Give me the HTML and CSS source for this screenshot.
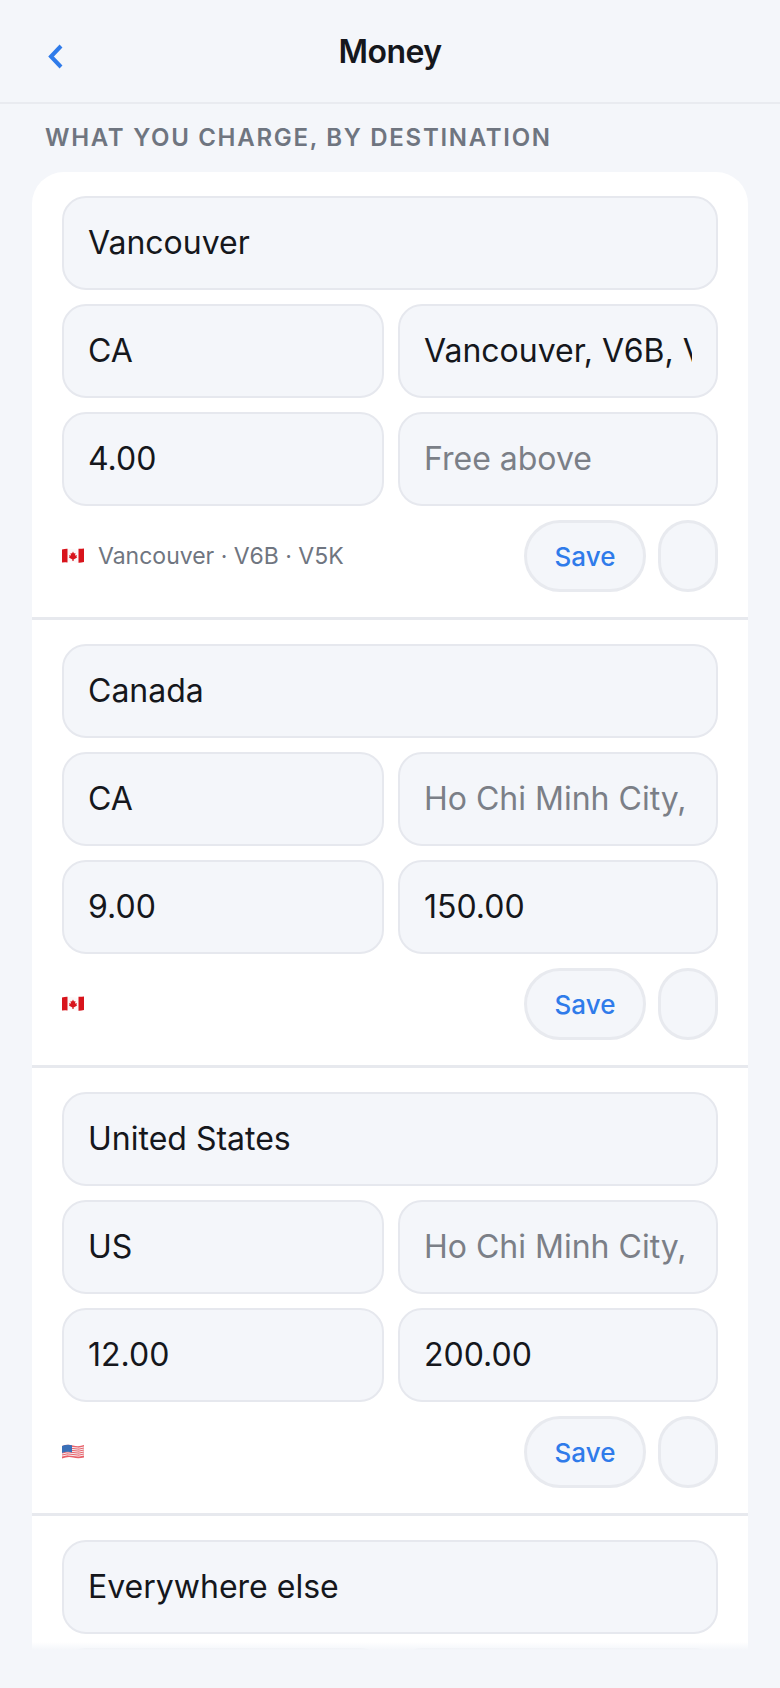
FILE: index.html
```html
<!DOCTYPE html>
<html>
<head>
    <title>Money</title>
    <meta charset="utf-8">
    <link rel="stylesheet" href="styles.css">
</head>
<body>
    <div class="app">
        <header class="topbar">
            <svg class="back" width="18" height="27" viewBox="0 0 18 27">
                <path d="M15 3 L5 13.5 L15 24" />
            </svg>
            <h1 class="title">Money</h1>
        </header>

        <main class="content">
            <h2 class="section-label">WHAT YOU CHARGE, BY DESTINATION</h2>

            <div class="card">
                <section class="zone">
                    <div class="field"><span class="field-text">Vancouver</span></div>
                    <div class="field-pair">
                        <div class="field"><span class="field-text">CA</span></div>
                        <div class="field"><span class="field-text">Vancouver, V6B, V5K</span></div>
                    </div>
                    <div class="field-pair">
                        <div class="field"><span class="field-text">4.00</span></div>
                        <div class="field"><span class="field-text placeholder">Free above</span></div>
                    </div>
                    <div class="zone-footer">
                        <div class="zone-info">
                            <svg class="flag" viewBox="0 0 22 16"><use href="#flag-ca" /></svg>
                            <span class="zone-note">Vancouver · V6B · V5K</span>
                        </div>
                        <button class="btn-save" type="button">Save</button>
                        <button class="btn-icon" type="button"></button>
                    </div>
                </section>

                <section class="zone">
                    <div class="field"><span class="field-text">Canada</span></div>
                    <div class="field-pair">
                        <div class="field"><span class="field-text">CA</span></div>
                        <div class="field"><span class="field-text placeholder">Ho Chi Minh City,</span></div>
                    </div>
                    <div class="field-pair">
                        <div class="field"><span class="field-text">9.00</span></div>
                        <div class="field"><span class="field-text">150.00</span></div>
                    </div>
                    <div class="zone-footer">
                        <div class="zone-info">
                            <svg class="flag" viewBox="0 0 22 16"><use href="#flag-ca" /></svg>
                        </div>
                        <button class="btn-save" type="button">Save</button>
                        <button class="btn-icon" type="button"></button>
                    </div>
                </section>

                <section class="zone">
                    <div class="field"><span class="field-text">United States</span></div>
                    <div class="field-pair">
                        <div class="field"><span class="field-text">US</span></div>
                        <div class="field"><span class="field-text placeholder">Ho Chi Minh City,</span></div>
                    </div>
                    <div class="field-pair">
                        <div class="field"><span class="field-text">12.00</span></div>
                        <div class="field"><span class="field-text">200.00</span></div>
                    </div>
                    <div class="zone-footer">
                        <div class="zone-info">
                            <svg class="flag" viewBox="0 0 22 16">
                                <path fill="#e8626a" d="M0 2 Q5 0 11 1.5 T22 1 V13.5 Q16 15 11 13.5 T0 14.5 Z" />
                                <path fill="none" stroke="#f6f0f2" stroke-width="1" d="M0 4 Q5 2 11 3.5 T22 3 M0 6 Q5 4 11 5.5 T22 5 M0 8 Q5 6 11 7.5 T22 7 M0 10 Q5 8 11 9.5 T22 9 M0 12 Q5 10 11 11.5 T22 11" />
                                <path fill="#3a70b8" d="M0 2 Q5 0 10 1.2 V8.4 Q5 7 0 9 Z" />
                            </svg>
                        </div>
                        <button class="btn-save" type="button">Save</button>
                        <button class="btn-icon" type="button"></button>
                    </div>
                </section>

                <section class="zone">
                    <div class="field"><span class="field-text">Everywhere else</span></div>
                    <div class="field-pair">
                        <div class="field"></div>
                        <div class="field"></div>
                    </div>
                </section>
            </div>
        </main>

        <div class="bottom-fade"></div>
    </div>

    <svg class="defs" width="0" height="0">
        <symbol id="flag-ca" viewBox="0 0 22 16">
            <path fill="#fbf8f8" d="M0 1.5 Q5 0 11 1.2 T22 0.5 V14 Q16 15.5 11 14 T0 14.5 Z" />
            <path fill="#d8141c" d="M0 1.5 Q3 0.6 5.5 0.7 V14.4 Q3 14.1 0 14.5 Z" />
            <path fill="#d8141c" d="M16.5 0.8 Q19 1 22 0.5 V14 Q19 14.8 16.5 14.7 Z" />
            <path fill="#d8141c" d="M11 3.5 L12 5.5 L13.5 5 L13 7.5 L15 7.2 L14.4 9 L15.2 9.6 L11.6 11.5 V13 H10.4 V11.5 L6.8 9.6 L7.6 9 L7 7.2 L9 7.5 L8.5 5 L10 5.5 Z" />
        </symbol>
    </svg>
</body>
</html>
```

FILE: styles.css
```css
* {
    box-sizing: border-box;
}

body {
    margin: 0;
    background-color: #f4f6fa;
    font-family: Inter, "Liberation Sans", sans-serif;
    color: #15171c;
}

.app {
    position: relative;
    display: flex;
    flex-direction: column;
    height: 100vh;
    overflow: hidden;
}

.topbar {
    flex: none;
    display: flex;
    align-items: center;
    justify-content: center;
    position: relative;
    height: 104px;
    border-bottom: 2px solid #e9ebf0;
}

.back {
    position: absolute;
    left: 46px;
    top: 43px;
}

.back path {
    fill: none;
    stroke: #2f7bea;
    stroke-width: 4;
}

.title {
    margin: 0;
    font-size: 32px;
    font-weight: 600;
    letter-spacing: -0.5px;
}

.content {
    flex: 1;
    min-height: 0;
    padding: 20px 32px 0;
}

.section-label {
    margin: 0 0 20px 13px;
    font-size: 24px;
    line-height: 28px;
    font-weight: 600;
    letter-spacing: 1.7px;
    color: #6f7580;
}

.card {
    background-color: #fff;
    border-radius: 32px 32px 0 0;
}

.zone {
    display: flex;
    flex-direction: column;
    gap: 14px;
    padding: 24px 30px 25px;
    border-bottom: 3px solid #e7e9ee;
}

.field-pair {
    display: grid;
    grid-template-columns: 322px 1fr;
    gap: 14px;
}

.field {
    display: flex;
    align-items: center;
    height: 94px;
    padding: 0 24px 2px 24px;
    background-color: #f4f6fa;
    border: 2px solid #e6e8ee;
    border-radius: 24px;
    font-size: 32px;
    min-width: 0;
}

.field-text {
    overflow: hidden;
    white-space: nowrap;
}

.placeholder {
    color: #7b7f87;
}

.zone-footer {
    display: flex;
    align-items: center;
    gap: 12px;
}

.zone-info {
    flex: 1;
    display: flex;
    align-items: center;
    gap: 14px;
}

.flag {
    width: 22px;
    height: 16px;
}

.zone-note {
    font-size: 23px;
    color: #6f7580;
}

.btn-save,
.btn-icon {
    height: 72px;
    background-color: #f4f6fa;
    border: 3px solid #e8eaef;
    border-radius: 36px;
    padding: 0;
    font-family: inherit;
}

.btn-save {
    width: 122px;
    font-size: 26px;
    font-weight: 500;
    color: #2f7bea;
}

.btn-icon {
    width: 60px;
}

.bottom-fade {
    position: absolute;
    left: 0;
    right: 0;
    bottom: 0;
    height: 46px;
    background: linear-gradient(to bottom, rgba(244, 246, 250, 0), #f4f6fa 8px);
}

.defs {
    position: absolute;
}
```
